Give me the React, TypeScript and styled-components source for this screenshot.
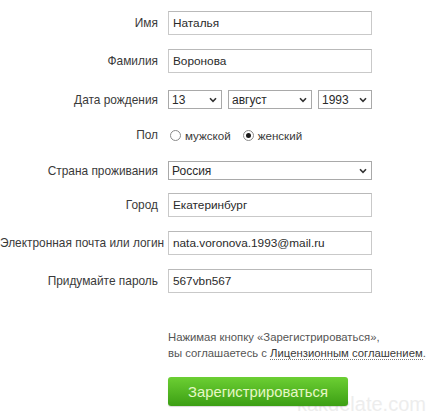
import React from "react";
import styled, { createGlobalStyle } from "styled-components";

const Global = createGlobalStyle`
  html, body { margin: 0; padding: 0; background: #ffffff; }
  body { font-family: Arial, "Liberation Sans", sans-serif; }
`;

const Page = styled.div`
  position: relative;
  width: 434px;
  height: 418px;
  overflow: hidden;
  background: #fff;
`;

const Form = styled.form`
  display: flex;
  flex-direction: column;
  padding-top: 11px;
`;

const Row = styled.div<{ $mt: number; $h: number }>`
  display: grid;
  grid-template-columns: 158px 204px;
  column-gap: 10px;
  align-items: center;
  height: ${(p) => p.$h}px;
  margin-top: ${(p) => p.$mt}px;
`;

const Label = styled.label`
  text-align: right;
  font-size: 11.9px;
  color: #3a3a3a;
  white-space: nowrap;
`;

const TextBox = styled.div`
  box-sizing: border-box;
  height: 24px;
  border: 1px solid #c9c9c9;
  border-top-color: #b9b9b9;
  background: #fff;
  padding: 0 4px;
  display: flex;
  align-items: center;
  font-size: 11.8px;
  color: #2a2a2a;
`;

const SelectGroup = styled.div`
  display: flex;
  gap: 6px;
`;

const SelectBox = styled.div<{ $w: number }>`
  box-sizing: border-box;
  width: ${(p) => p.$w}px;
  height: 19px;
  border: 1px solid #a9a9a9;
  background: #fff;
  display: flex;
  align-items: center;
  justify-content: space-between;
  padding: 0 4px 0 3px;
  font-size: 12px;
  color: #2a2a2a;
`;

const Chevron = () => (
  <svg width="8" height="6" viewBox="0 0 8 6">
    <path d="M1 1.2 L4 4.3 L7 1.2" fill="none" stroke="#333" strokeWidth="1.6" />
  </svg>
);

const Radios = styled.div`
  display: flex;
  align-items: center;
  font-size: 11.6px;
  color: #3a3a3a;
`;

const Radio = styled.span<{ $on?: boolean }>`
  box-sizing: border-box;
  width: 11px;
  height: 11px;
  border-radius: 50%;
  border: 1px solid #8a8a8a;
  background: #fff;
  margin: 0 4px 0 2px;
  display: flex;
  align-items: center;
  justify-content: center;
  &::after {
    content: "";
    width: 5px;
    height: 5px;
    border-radius: 50%;
    background: ${(p) => (p.$on ? "#1a1a1a" : "transparent")};
  }
`;

const RadioText = styled.span`
  margin-right: 10px;
`;

const Note = styled.p`
  margin: 36px 0 0 168px;
  font-size: 11.3px;
  line-height: 16px;
  color: #555;
  white-space: nowrap;
`;

const Link = styled.span`
  color: #3a3a3a;
  border-bottom: 1px dotted #777;
`;

const Button = styled.button`
  position: relative;
  z-index: 1;
  margin: 16px 0 0 168px;
  width: 180px;
  height: 29px;
  border: none;
  border-radius: 3px;
  background: linear-gradient(#6ccf33, #3c9f14);
  box-shadow: 0 1px 1px rgba(0, 0, 0, 0.15);
  color: #e6f8c6;
  font-family: Arial, "Liberation Sans", sans-serif;
  font-size: 14.8px;
  padding: 0;
  cursor: pointer;
`;

const Watermark = styled.div`
  position: absolute;
  left: 297px;
  top: 394px;
  font-family: Arial, "Liberation Sans", sans-serif;
  font-size: 20px;
  line-height: 20px;
  color: #ededed;
`;

export default function App() {
  return (
    <Page>
      <Global />
      <Form>
        <Row $mt={0} $h={24}>
          <Label>Имя</Label>
          <TextBox>Наталья</TextBox>
        </Row>
        <Row $mt={14} $h={24}>
          <Label>Фамилия</Label>
          <TextBox>Воронова</TextBox>
        </Row>
        <Row $mt={17} $h={19}>
          <Label>Дата рождения</Label>
          <SelectGroup>
            <SelectBox $w={54}>
              13 <Chevron />
            </SelectBox>
            <SelectBox $w={84}>
              август <Chevron />
            </SelectBox>
            <SelectBox $w={54}>
              1993 <Chevron />
            </SelectBox>
          </SelectGroup>
        </Row>
        <Row $mt={19} $h={14}>
          <Label>Пол</Label>
          <Radios>
            <Radio />
            <RadioText>мужской</RadioText>
            <Radio $on />
            <RadioText>женский</RadioText>
          </Radios>
        </Row>
        <Row $mt={19} $h={19}>
          <Label>Страна проживания</Label>
          <SelectBox $w={204}>
            Россия <Chevron />
          </SelectBox>
        </Row>
        <Row $mt={13} $h={24}>
          <Label>Город</Label>
          <TextBox>Екатеринбург</TextBox>
        </Row>
        <Row $mt={14} $h={24}>
          <Label>Электронная почта или логин</Label>
          <TextBox>nata.voronova.1993@mail.ru</TextBox>
        </Row>
        <Row $mt={14} $h={24}>
          <Label>Придумайте пароль</Label>
          <TextBox>567vbn567</TextBox>
        </Row>
        <Note>
          Нажимая кнопку «Зарегистрироваться»,
          <br />
          вы соглашаетесь с <Link>Лицензионным соглашением</Link>.
        </Note>
        <Button type="button">Зарегистрироваться</Button>
      </Form>
      <Watermark>kakdelate.com</Watermark>
    </Page>
  );
}
